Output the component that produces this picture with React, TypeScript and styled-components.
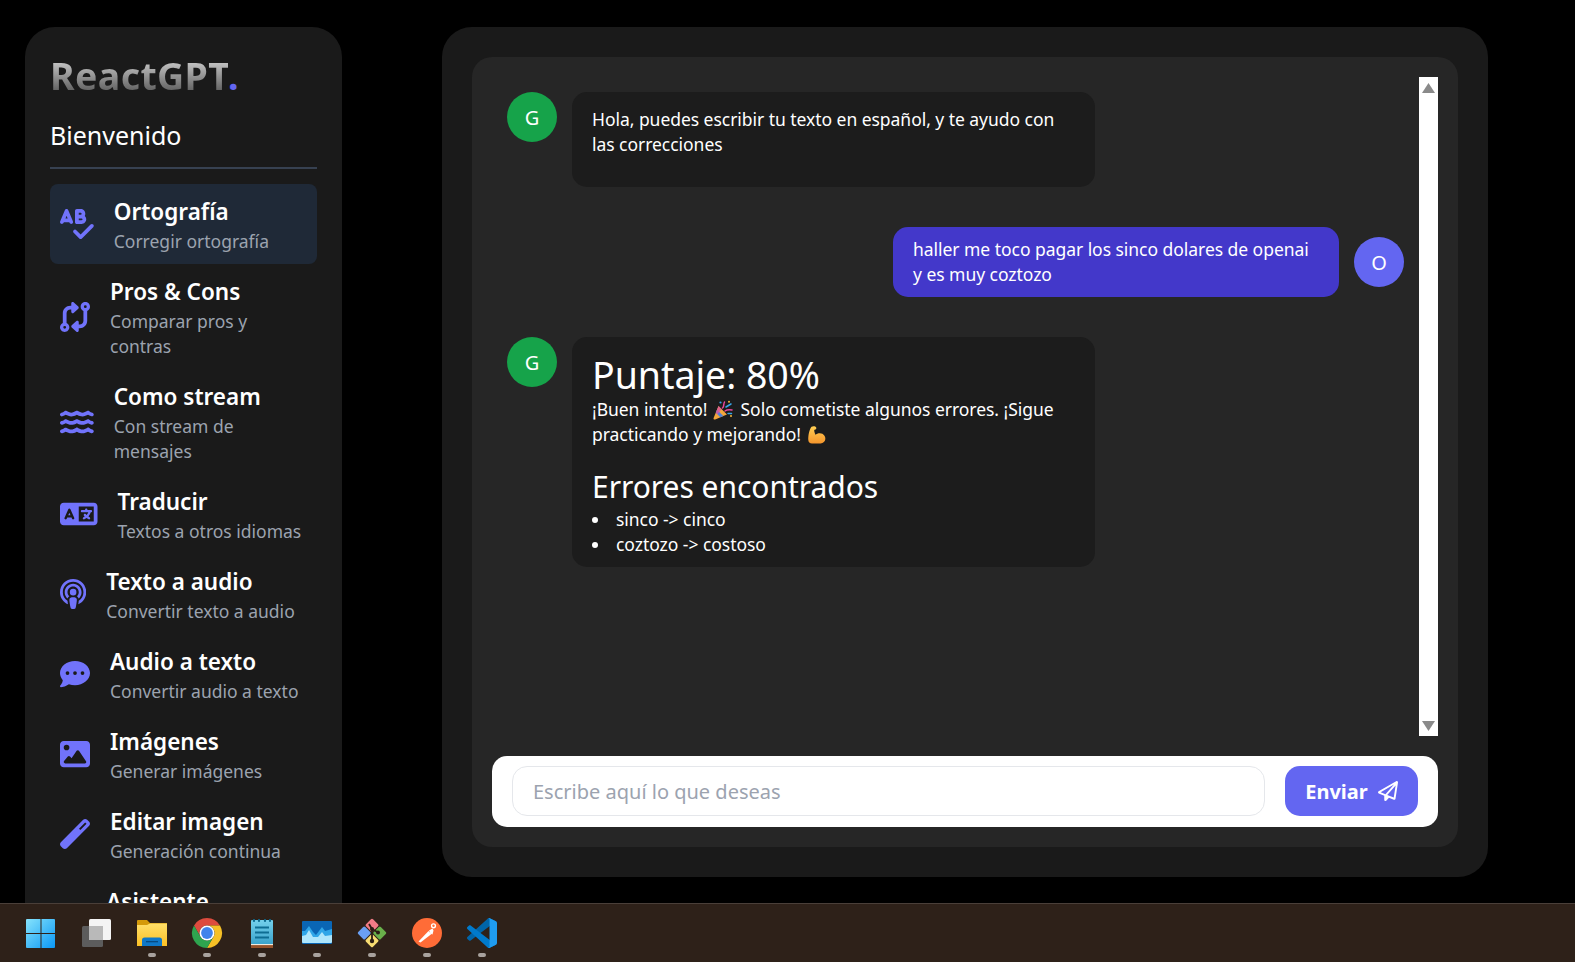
import React from 'react';
import styled, { createGlobalStyle } from 'styled-components';
import {
  FaSpellCheck,
  FaCodeCompare,
  FaWater,
  FaLanguage,
  FaPodcast,
  FaCommentDots,
  FaImage,
  FaWandMagic,
  FaRegPaperPlane,
} from 'react-icons/fa6';

const GlobalStyle = createGlobalStyle`
  html, body {
    margin: 0;
    height: 100%;
    background: #000;
    font-family: "Noto Sans", "Open Sans", sans-serif;
    color: #fff;
  }
  * { box-sizing: border-box; }
`;

const Page = styled.div`
  height: 962px;
  display: flex;
  flex-direction: column;
  overflow: hidden;
`;

const Workspace = styled.div`
  flex: 1;
  min-height: 0;
  display: flex;
  align-items: flex-start;
  padding: 27px 87px 0 25px;
  gap: 100px;
  overflow: hidden;
`;

const Sidebar = styled.nav`
  flex: 0 0 317px;
  background: #1a1a1a;
  border-radius: 30px 30px 0 0;
  padding: 25px 25px 30px;
  display: flex;
  flex-direction: column;
`;

const Logo = styled.h1`
  margin: 0;
  font-size: 37.5px;
  line-height: 47px;
  font-weight: 700;
  letter-spacing: 0.4px;
`;

const LogoText = styled.span`
  background: linear-gradient(to bottom, #d2d2d2 15%, #5a5a5a 85%);
  -webkit-background-clip: text;
  background-clip: text;
  color: transparent;
`;

const LogoDot = styled.span`
  color: #6366f1;
`;

const Welcome = styled.p`
  margin: 19px 0 0;
  font-size: 25px;
  line-height: 35px;
`;

const Divider = styled.div`
  height: 2px;
  background: #374151;
  margin: 14px 0 15px;
`;

const NavItem = styled.a<{ $active?: boolean }>`
  display: flex;
  align-items: center;
  gap: 20px;
  padding: 10px;
  border-radius: 8px;
  background: ${(p) => (p.$active ? '#1f2937' : 'transparent')};
`;

const NavIcon = styled.span<{ $width: number }>`
  display: flex;
  color: #7173fb;
  flex: none;
  svg {
    height: 30px;
    width: ${(p) => p.$width}px;
  }
`;

const NavText = styled.span`
  display: flex;
  flex-direction: column;
`;

const NavTitle = styled.span`
  font-size: 22.5px;
  line-height: 35px;
  font-weight: 600;
`;

const NavSub = styled.span`
  font-size: 17.5px;
  line-height: 25px;
  color: #9ca3af;
`;

const Main = styled.main`
  flex: 1;
  height: 850px;
  background: #1a1a1a;
  border-radius: 30px;
  padding: 30px;
  display: flex;
`;

const ChatPanel = styled.section`
  flex: 1;
  min-width: 0;
  background: #262626;
  border-radius: 20px;
  padding: 20px;
  display: flex;
  flex-direction: column;
  gap: 20px;
`;

const ChatScroll = styled.div`
  flex: 1;
  min-height: 0;
  display: flex;
`;

const Messages = styled.div`
  flex: 1;
  min-width: 0;
  display: flex;
  flex-direction: column;
  gap: 10px;
`;

const BotRow = styled.div`
  display: flex;
  align-items: flex-start;
  gap: 15px;
  padding: 15px;
`;

const UserRow = styled.div`
  display: flex;
  align-items: center;
  justify-content: flex-end;
  gap: 15px;
  padding: 15px;
`;

const Avatar = styled.div<{ $bg: string }>`
  width: 50px;
  height: 50px;
  flex: none;
  border-radius: 50%;
  background: ${(p) => p.$bg};
  display: flex;
  align-items: center;
  justify-content: center;
  font-size: 20px;
`;

const BotBubble = styled.div`
  width: 523px;
  background: #1c1c1c;
  border-radius: 15px;
  padding: 15px 20px 10px;
  font-size: 17.5px;
  line-height: 25px;
  letter-spacing: -0.04px;
`;

const UserBubble = styled.div`
  width: 446px;
  background: #4338ca;
  border-radius: 15px;
  padding: 10px 20px;
  font-size: 17.5px;
  line-height: 25px;
  letter-spacing: -0.04px;
`;

const Paragraph = styled.p`
  margin: 0 0 20px;
`;

const ScoreTitle = styled.h3`
  margin: 0;
  font-size: 37.5px;
  line-height: 45px;
  font-weight: 400;
`;

const ScoreText = styled.p`
  margin: 0;
`;

const ErrorsTitle = styled.h4`
  margin: 20px 0 0;
  font-size: 30px;
  line-height: 40px;
  font-weight: 400;
`;

const ErrorList = styled.ul`
  margin: 0;
  padding: 0;
  list-style: none;
`;

const ErrorItem = styled.li`
  display: flex;
  align-items: center;
  gap: 18px;
  &::before {
    content: '';
    width: 6px;
    height: 6px;
    border-radius: 50%;
    background: #fff;
    flex: none;
  }
`;

const Emoji = styled.svg`
  display: inline-block;
  width: 20px;
  height: 20px;
  vertical-align: -4px;
  margin: 0 3px 0 1px;
`;

const ScrollTrack = styled.div`
  flex: 0 0 19px;
  background: #fff;
  display: flex;
  flex-direction: column;
  justify-content: space-between;
  align-items: center;
  padding: 6px 0 5px;
`;

const ScrollArrow = styled.svg`
  width: 13px;
  height: 10px;
  fill: #8a8a8a;
`;

const Composer = styled.form`
  background: #fff;
  border-radius: 15px;
  padding: 10px 20px;
  height: 71px;
  display: flex;
  align-items: flex-start;
  gap: 20px;
`;

const ComposerInput = styled.input`
  flex: 1;
  min-width: 0;
  height: 50px;
  border: 1px solid #e5e7eb;
  border-radius: 15px;
  padding: 0 20px;
  font-family: inherit;
  font-size: 20px;
  outline: none;
  &::placeholder {
    color: #9ca3af;
  }
`;

const SendButton = styled.button`
  flex: none;
  width: 133px;
  height: 50px;
  border: none;
  border-radius: 15px;
  background: #6366f1;
  color: #fff;
  font-family: inherit;
  font-size: 20px;
  font-weight: 700;
  display: flex;
  align-items: center;
  justify-content: center;
  gap: 10px;
  svg {
    font-size: 20px;
  }
`;

const Taskbar = styled.footer`
  flex: 0 0 59px;
  background: #2e2119;
  border-top: 1px solid #4a3f39;
  display: flex;
  padding: 14px 0 0 27px;
  gap: 25px;
`;

const TaskItem = styled.div`
  width: 30px;
  display: flex;
  flex-direction: column;
  align-items: center;
  gap: 5px;
`;

const TaskIcon = styled.svg`
  width: 30px;
  height: 30px;
  display: block;
  overflow: visible;
`;

const TaskDot = styled.span`
  width: 8px;
  height: 4px;
  border-radius: 2px;
  background: #a8a29e;
`;

const navItems = [
  { icon: <FaSpellCheck />, width: 33.75, title: 'Ortografía', sub: 'Corregir ortografía', active: true },
  { icon: <FaCodeCompare />, width: 30, title: 'Pros & Cons', sub: 'Comparar pros y contras' },
  { icon: <FaWater />, width: 33.75, title: 'Como stream', sub: 'Con stream de mensajes' },
  { icon: <FaLanguage />, width: 37.5, title: 'Traducir', sub: 'Textos a otros idiomas' },
  { icon: <FaPodcast />, width: 26.25, title: 'Texto a audio', sub: 'Convertir texto a audio' },
  { icon: <FaCommentDots />, width: 30, title: 'Audio a texto', sub: 'Convertir audio a texto' },
  { icon: <FaImage />, width: 30, title: 'Imágenes', sub: 'Generar imágenes' },
  { icon: <FaWandMagic />, width: 30, title: 'Editar imagen', sub: 'Generación continua' },
  { icon: <FaCommentDots />, width: 26.25, title: 'Asistente', sub: 'Información del asistente' },
];

const WindowsIcon = () => (
  <TaskIcon viewBox="1 0 30 30">
    <defs>
      <linearGradient id="win" x1="0" y1="0" x2="1" y2="1">
        <stop offset="0" stopColor="#86e3fc" />
        <stop offset="1" stopColor="#0a97f5" />
      </linearGradient>
    </defs>
    <path fill="url(#win)" d="M1 1h13.500v14H0V2a1 1 0 0 1 1-1zM15.500 1H28a1 1 0 0 1 1 1v13H15.500zM0 16h14.500v14H1a1 1 0 0 1-1-1zM15.500 16H29v13a1 1 0 0 1-1 1H15.500z" />
  </TaskIcon>
);

const TaskViewIcon = () => (
  <TaskIcon viewBox="0 0 30 30">
    <rect x="0" y="8" width="21" height="21" rx="1.500" fill="#5c5c5c" />
    <rect x="7" y="1" width="22" height="21" rx="1.500" fill="#f4f4f4" />
    <rect x="7" y="8" width="14" height="14" fill="#b9b9b9" />
  </TaskIcon>
);

const ExplorerIcon = () => (
  <TaskIcon viewBox="0 0 30 30">
    <defs>
      <linearGradient id="folder" x1="0" y1="0" x2="0" y2="1">
        <stop offset="0" stopColor="#ffe06a" />
        <stop offset="1" stopColor="#fbbf24" />
      </linearGradient>
    </defs>
    <path fill="#d49a0a" d="M0 3a1 1 0 0 1 1-1h9l3 3h17v4H0z" />
    <path fill="url(#folder)" d="M0 7h10l3-1.500h17V28H0z" />
    <path fill="#0f78c8" d="M5 22a2.500 2.500 0 0 1 2.500-2.500h15A2.500 2.500 0 0 1 25 22v6H5z" />
    <rect x="9" y="23" width="12" height="1.300" fill="#064a82" />
  </TaskIcon>
);

const ChromeIcon = () => (
  <TaskIcon viewBox="0 0 30 30">
    <path fill="#dd4b3e" d="M28 7.500H15a7.500 7.500 0 0 0-6.500 11.250L2 7.500a15 15 0 0 1 26 0z" />
    <path fill="#f6c026" d="M28 7.500A15 15 0 0 1 15 30l6.500-11.250A7.500 7.500 0 0 0 15 7.500z" />
    <path fill="#2ea44f" d="M2 7.500A15 15 0 0 0 15 30l6.500-11.250a7.500 7.500 0 0 1-13 0z" />
    <circle cx="15" cy="15" r="7.500" fill="#fff" />
    <circle cx="15" cy="15" r="5.900" fill="#3f83ec" />
  </TaskIcon>
);

const NotepadIcon = () => (
  <TaskIcon viewBox="0 0 30 30">
    <defs>
      <linearGradient id="pad" x1="0" y1="0" x2="0" y2="1">
        <stop offset="0" stopColor="#74d0ec" />
        <stop offset="1" stopColor="#3ba3cb" />
      </linearGradient>
    </defs>
    <rect x="4" y="26" width="22" height="4" fill="#96522a" />
    <rect x="4" y="25.500" width="22" height="1.600" fill="#f1e9dc" />
    <rect x="4" y="2" width="22" height="24" rx="1" fill="url(#pad)" />
    <path stroke="#0e6d93" strokeWidth="2" d="M8 9.500h14M8 14.500h14M8 19.500h14" />
    <path stroke="#0e6d93" strokeWidth="2.200" strokeLinecap="round" d="M7 2v1M12 2v1M18 2v1M23 2v1" />
  </TaskIcon>
);

const MonitorIcon = () => (
  <TaskIcon viewBox="0 0 30 30">
    <rect y="3" width="30" height="23" rx="1" fill="#0a66b5" />
    <path fill="#2fa6e8" d="M0 13l3 0 4-5 4 6 3 3 3-4 3-4 3 4 7-2v8H0z" />
    <path fill="#aee6fc" d="M0 18l4-1 3-5 4 7 5 0 4-5 3 4 7-1v7a1 1 0 0 1-1 1H1a1 1 0 0 1-1-1z" />
  </TaskIcon>
);

const GitIcon = () => (
  <TaskIcon viewBox="0 0 30 30">
    <g transform="rotate(45 15 15)">
      <rect x="4.500" y="4.500" width="10" height="10" rx="1.500" fill="#f27c86" />
      <rect x="15.500" y="4.500" width="10" height="10" rx="1.500" fill="#69b04a" />
      <rect x="15.500" y="15.500" width="10" height="10" rx="1.500" fill="#f7dc72" />
      <rect x="4.500" y="15.500" width="10" height="10" rx="1.500" fill="#6a9ff2" />
    </g>
    <path stroke="#2b1d15" strokeWidth="1.800" fill="none" d="M12 6l3 5v13M15 11l7 4" />
    <circle cx="15" cy="11" r="2" fill="#2b1d15" />
    <circle cx="15" cy="23" r="2.200" fill="#2b1d15" />
    <circle cx="21" cy="14.500" r="2" fill="#2b1d15" />
  </TaskIcon>
);

const PostmanIcon = () => (
  <TaskIcon viewBox="0 0 30 30">
    <circle cx="15" cy="15" r="15" fill="#ff6c37" />
    <path fill="#fff" d="M6.500 23.500 16.500 13l3 3-11 8.500z" />
    <path fill="#fff" d="M17 12.500l3.500-2 1 2-1 4-2-1z" />
    <circle cx="21.500" cy="7.800" r="2.600" fill="#fff" />
    <circle cx="21.500" cy="7.800" r="1.200" fill="#ff6c37" />
  </TaskIcon>
);

const VSCodeIcon = () => (
  <TaskIcon viewBox="0 0 100 100">
    <path fill="#0065A9" d="M96.4614 10.7962L75.8569 0.875542C73.4719 -0.272773 70.6217 0.211611 68.75 2.08333L1.29858 63.5832C-0.515693 65.2373 -0.513607 68.0937 1.30308 69.7452L6.81272 74.754C8.29793 76.1042 10.5347 76.2036 12.1338 74.9905L93.3609 13.3699C96.086 11.3026 100 13.2462 100 16.6667V16.4275C100 14.0265 98.6246 11.8378 96.4614 10.7962Z" />
    <path fill="#007ACC" d="M96.4614 89.2038L75.8569 99.1245C73.4719 100.273 70.6217 99.7884 68.75 97.9167L1.29858 36.4169C-0.515693 34.7627 -0.513607 31.9063 1.30308 30.2548L6.81272 25.246C8.29793 23.8958 10.5347 23.7964 12.1338 25.0095L93.3609 86.6301C96.086 88.6974 100 86.7538 100 83.3333V83.5725C100 85.9735 98.6246 88.1622 96.4614 89.2038Z" />
    <path fill="#1F9CF0" d="M75.8578 99.1263C73.4721 100.274 70.6219 99.7885 68.75 97.9166C71.0564 100.223 75 98.5895 75 95.3278V4.67213C75 1.41039 71.0564 -0.223106 68.75 2.08329C70.6219 0.211402 73.4721 -0.273666 75.8578 0.873633L96.4587 10.7807C98.6234 11.8217 100 14.0112 100 16.4132V83.5871C100 85.9891 98.6234 88.1786 96.4586 89.2196L75.8578 99.1263Z" />
  </TaskIcon>
);

const taskIcons = [
  { icon: <WindowsIcon /> },
  { icon: <TaskViewIcon /> },
  { icon: <ExplorerIcon />, running: true },
  { icon: <ChromeIcon />, running: true },
  { icon: <NotepadIcon />, running: true },
  { icon: <MonitorIcon />, running: true },
  { icon: <GitIcon />, running: true },
  { icon: <PostmanIcon />, running: true },
  { icon: <VSCodeIcon />, running: true },
];

const PartyEmoji = () => (
  <Emoji viewBox="0 0 20 20" role="img" aria-label="🎉">
    <path fill="#f3a63b" d="M5.500 6 14 14.500 2.200 19.500c-1 .4-2-.6-1.600-1.600z" />
    <path fill="#4f7fd8" d="M4 9.800 10.300 16l-3 1.300L2.900 12.800z" />
    <path fill="#d9559c" d="M5.500 6l3 3-4 5.500L2.900 12.800z" opacity=".85" />
    <path stroke="#e8479b" strokeWidth="1.500" fill="none" strokeLinecap="round" d="M9.500 8c2-1.500.5-3 2-6M12 11c2-1.500 4-1.500 7-1" />
    <path stroke="#36a5e8" strokeWidth="1.500" fill="none" strokeLinecap="round" d="M13 7l5-3M15 13.500h3.500" />
    <circle cx="16" cy="1.800" r="1" fill="#f5b83d" />
    <circle cx="7.500" cy="2.500" r="1.100" fill="#36a5e8" />
    <circle cx="18" cy="16" r="1" fill="#f5b83d" />
  </Emoji>
);

const MuscleEmoji = () => (
  <Emoji viewBox="0 0 20 20" role="img" aria-label="💪">
    <defs>
      <linearGradient id="arm" x1="0" y1="0" x2="0" y2="1">
        <stop offset="0" stopColor="#ffcf54" />
        <stop offset="1" stopColor="#f5952c" />
      </linearGradient>
    </defs>
    <path fill="url(#arm)" d="M4.500 1.800C6 .8 8.500 1 9.200 2.500c.5 1.200-.3 2.300-1.500 2.300-.4 0-.6.700-.4 1.500.2 1 .6 2.400 1.100 3.400 1.500-1.300 4.700-2.200 7-.9 2.600 1.500 3.700 4.500 2.500 7-1 2-3.500 2.800-6.400 2.800H5c-2.300 0-3.600-1.200-3.700-3.500C1.100 11.500 2 5 4.500 1.800z" />
  </Emoji>
);

const App: React.FC = () => {
  return (
    <Page>
      <GlobalStyle />
      <Workspace>
        <Sidebar>
          <Logo>
            <LogoText>ReactGPT</LogoText>
            <LogoDot>.</LogoDot>
          </Logo>
          <Welcome>Bienvenido</Welcome>
          <Divider />
          {navItems.map((item) => (
            <NavItem key={item.title} $active={item.active}>
              <NavIcon $width={item.width}>{item.icon}</NavIcon>
              <NavText>
                <NavTitle>{item.title}</NavTitle>
                <NavSub>{item.sub}</NavSub>
              </NavText>
            </NavItem>
          ))}
        </Sidebar>
        <Main>
          <ChatPanel>
            <ChatScroll>
              <Messages>
                <BotRow>
                  <Avatar $bg="#16a34a">G</Avatar>
                  <BotBubble>
                    <Paragraph>Hola, puedes escribir tu texto en español, y te ayudo con las correcciones</Paragraph>
                  </BotBubble>
                </BotRow>
                <UserRow>
                  <UserBubble>haller me toco pagar los sinco dolares de openai y es muy coztozo</UserBubble>
                  <Avatar $bg="#6366f1">O</Avatar>
                </UserRow>
                <BotRow>
                  <Avatar $bg="#16a34a">G</Avatar>
                  <BotBubble>
                    <ScoreTitle>Puntaje: 80%</ScoreTitle>
                    <ScoreText>
                      ¡Buen intento! <PartyEmoji /> Solo cometiste algunos errores. ¡Sigue practicando y mejorando! <MuscleEmoji />
                    </ScoreText>
                    <ErrorsTitle>Errores encontrados</ErrorsTitle>
                    <ErrorList>
                      <ErrorItem>sinco -&gt; cinco</ErrorItem>
                      <ErrorItem>coztozo -&gt; costoso</ErrorItem>
                    </ErrorList>
                  </BotBubble>
                </BotRow>
              </Messages>
              <ScrollTrack>
                <ScrollArrow viewBox="0 0 13 10"><path d="M6.500 0 13 10H0z" /></ScrollArrow>
                <ScrollArrow viewBox="0 0 13 10"><path d="M0 0h13L6.500 10z" /></ScrollArrow>
              </ScrollTrack>
            </ChatScroll>
            <Composer onSubmit={(e) => e.preventDefault()}>
              <ComposerInput placeholder="Escribe aquí lo que deseas" />
              <SendButton type="submit">
                Enviar <FaRegPaperPlane />
              </SendButton>
            </Composer>
          </ChatPanel>
        </Main>
      </Workspace>
      <Taskbar>
        {taskIcons.map((t, i) => (
          <TaskItem key={i}>
            {t.icon}
            {t.running && <TaskDot />}
          </TaskItem>
        ))}
      </Taskbar>
    </Page>
  );
};

export default App;
